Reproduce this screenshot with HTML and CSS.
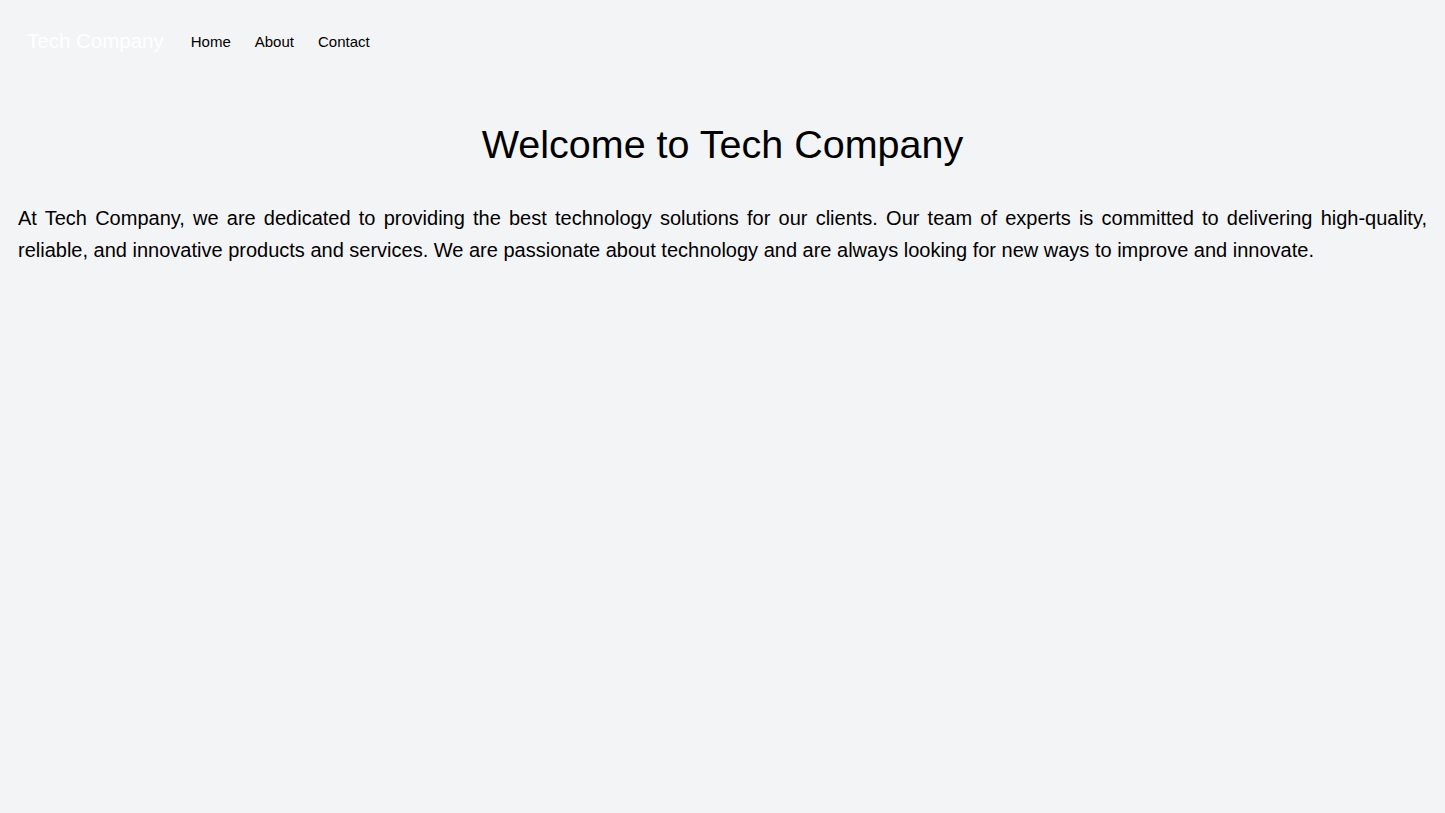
FILE: index.html
```html
<!DOCTYPE html>
<html lang="en">
<head>
    <meta charset="UTF-8">
    <meta name="viewport" content="width=device-width, initial-scale=1.0">
    <title>Tech Company</title>
    <link rel="stylesheet" href="styles.css">
</head>
<body>
    <nav class="nav">
        <a class="brand" href="#">Tech Company</a>
        <ul class="nav-links">
            <li><a href="#">Home</a></li>
            <li><a href="#">About</a></li>
            <li><a href="#">Contact</a></li>
        </ul>
    </nav>

    <main class="content">
        <h1 class="title">Welcome to Tech Company</h1>
        <p class="intro">At Tech Company, we are dedicated to providing the best technology solutions for our clients. Our team of experts is committed to delivering high-quality, reliable, and innovative products and services. We are passionate about technology and are always looking for new ways to improve and innovate.</p>
    </main>
</body>
</html>
```

FILE: styles.css
```css
* {
    margin: 0;
    padding: 0;
    box-sizing: border-box;
}
body {
    font-family: 'Liberation Sans', Arial, sans-serif;
    background-color: #f3f4f6;
    color: #000;
    min-height: 100vh;
}
a {
    color: inherit;
    text-decoration: none;
}
.nav {
    display: flex;
    align-items: center;
    padding: 24px 27px;
}
.brand {
    color: #fff;
    font-size: 20.5px;
    line-height: 34px;
    margin-right: 27px;
}
.nav-links {
    display: flex;
    list-style: none;
    gap: 24px;
    font-size: 15px;
}
.content {
    padding: 32px 18px;
}
.title {
    font-weight: 400;
    font-size: 39.5px;
    line-height: 60px;
    text-align: center;
    margin-bottom: 28px;
}
.intro {
    font-size: 20px;
    line-height: 32px;
    text-align: justify;
}
```
